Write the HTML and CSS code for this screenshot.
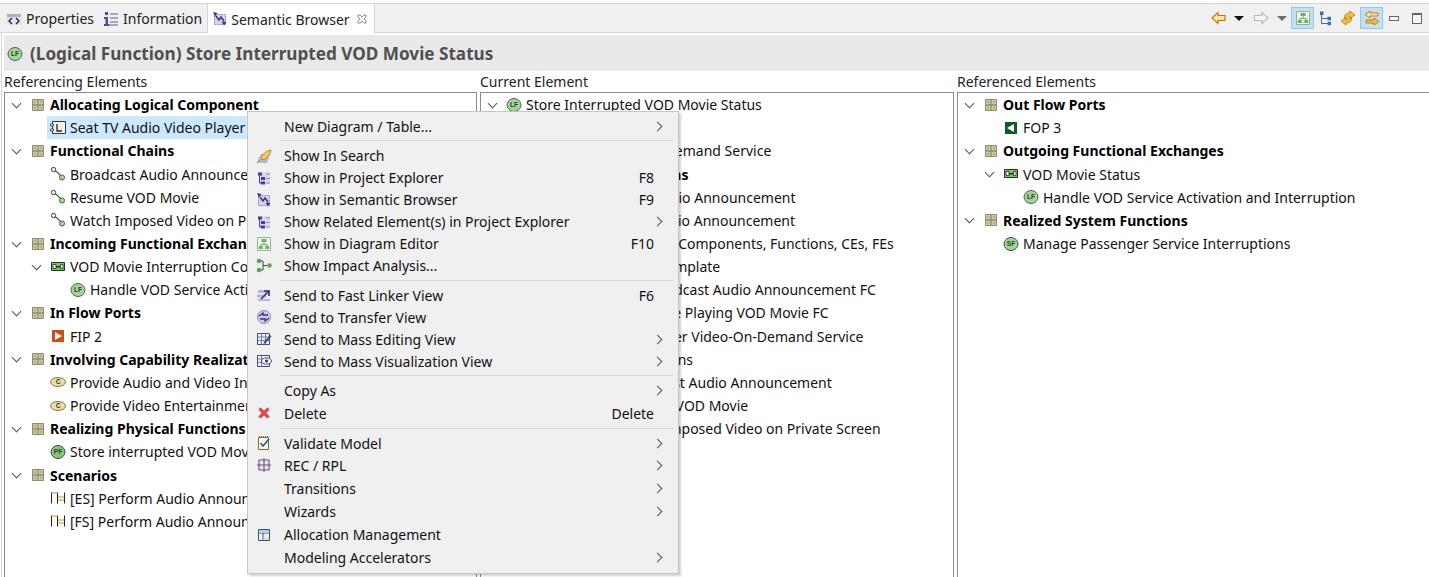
FILE: index.html
```html
<!DOCTYPE html>
<html lang="en">
<head>
    <meta charset="UTF-8">
    <meta name="viewport" content="width=device-width, initial-scale=1.0">
    <title>Semantic Browser</title>
    <link rel="stylesheet" href="styles.css">
</head>
<body>

<svg class="defs" width="0" height="0">
    <symbol id="i-cat" viewBox="0 0 16 16">
        <path d="M2.5 2.5h11v11h-11z" fill="#d9d7bb" stroke="#8f8c6c"/>
        <path d="M8 2v12M2 8h12" stroke="#8f8c6c" stroke-width="1.4"/>
        <path d="M3.5 3.5h3v3h-3zM9.5 3.5h3v3h-3zM3.5 9.5h3v3h-3zM9.5 9.5h3v3h-3z" fill="#b5b291"/>
    </symbol>
    <symbol id="i-lf" viewBox="0 0 16 16">
        <ellipse cx="8" cy="8" rx="7" ry="6.5" fill="#a6d397" stroke="#4a6b4a"/>
        <text x="8" y="10.4" text-anchor="middle" class="ico-text">LF</text>
    </symbol>
    <symbol id="i-pf" viewBox="0 0 16 16">
        <ellipse cx="8" cy="8" rx="7" ry="6.5" fill="#8fc084" stroke="#33503a"/>
        <text x="8" y="10.4" text-anchor="middle" class="ico-text">PF</text>
    </symbol>
    <symbol id="i-sf" viewBox="0 0 16 16">
        <ellipse cx="8" cy="8" rx="7" ry="6.5" fill="#a6d397" stroke="#33503a"/>
        <text x="8" y="10.4" text-anchor="middle" class="ico-text">SF</text>
    </symbol>
    <symbol id="i-comp" viewBox="0 0 16 16">
        <path d="M2.5 1.5h13v12h-13z" fill="#f3f3ee" stroke="#333"/>
        <path d="M.5 4h3v2h-3zM.5 9h3v2h-3z" fill="#fff" stroke="#333" stroke-width=".8"/>
        <path d="M7 4v7h5" fill="none" stroke="#222" stroke-width="1.3"/>
    </symbol>
    <symbol id="i-chain" viewBox="0 0 16 16">
        <path d="M4 4l3 2 3 3 2 2" fill="none" stroke="#555" stroke-width="1.2"/>
        <circle cx="3.5" cy="3.5" r="2.2" fill="#e5f0e0" stroke="#444"/>
        <circle cx="12" cy="11.5" r="2.6" fill="#a6d397" stroke="#4a6b4a"/>
    </symbol>
    <symbol id="i-fx" viewBox="0 0 16 16">
        <path d="M1.5 3.5h13v8h-13z" fill="#7fc06f" stroke="#1f3a1f"/>
        <path d="M3 5.500h3v4H3zM10.500 5.500h2.500v4h-2.500z" fill="#eef7e8" stroke="#1f3a1f" stroke-width=".8"/>
        <path d="M6 7h4.500v1.500H6z" fill="#1f3a1f"/>
    </symbol>
    <symbol id="i-fip" viewBox="0 0 16 16">
        <path d="M2 2h12v12H2z" fill="#cd4d12"/>
        <path d="M5 4l7 4-7 4z" fill="#fff"/>
    </symbol>
    <symbol id="i-fop" viewBox="0 0 16 16">
        <path d="M2 2h12v12H2z" fill="#0f5a2b"/>
        <path d="M11 4L4 8l7 4z" fill="#fff"/>
    </symbol>
    <symbol id="i-cap" viewBox="0 0 16 16">
        <ellipse cx="8" cy="8" rx="7.5" ry="4.5" fill="#f0dc9c" stroke="#84775a"/>
        <text x="8" y="10.4" text-anchor="middle" class="ico-text">C</text>
    </symbol>
    <symbol id="i-scn" viewBox="0 0 16 16">
        <path d="M1.500 2.500v11M7.500 2.500v11M14.500 2.500v11" fill="none" stroke="#222"/>
        <path d="M1.500 3h6M8 7h6M8 10h6" stroke="#c49a2b" stroke-width="1.200"/>
    </symbol>
    <symbol id="i-back" viewBox="0 0 16 16">
        <path d="M2 8l6-5.500v3h7v5H8v3z" fill="#fde6a6" stroke="#b9760f" stroke-width="1.1"/>
    </symbol>
    <symbol id="i-fwd" viewBox="0 0 16 16">
        <path d="M15 8L9 2.500v3H1.500v5H9v3z" fill="#f6f6f6" stroke="#b9b9b9" stroke-width="1.1"/>
    </symbol>
    <symbol id="i-diag" viewBox="0 0 16 16">
        <path d="M1.500 1.500h13v13h-13z" fill="#eef5ea" stroke="#8cbb8a"/>
        <path d="M5.500 3h5v3h-5zM2.800 10h4v3h-4zM9.200 10h4v3h-4z" fill="#74ab70"/>
        <path d="M8 6v2.500M4.800 10V8.500h6.400V10" fill="none" stroke="#74ab70"/>
    </symbol>
    <symbol id="i-tree" viewBox="0 0 16 16">
        <path d="M2.500 4v9.500H9M2.500 8.500H9" fill="none" stroke="#3c6fb0"/>
        <path d="M1 1.500h3.500v3.500H1zM8.500 6.800h3.500v3.400H8.500zM8.500 11.800h3.500v3.400H8.500z" fill="#3c6fb0"/>
    </symbol>
    <symbol id="i-sync" viewBox="0 0 16 16">
        <path d="M4.500 8.500C4 5 6.500 2.500 10 3V1l5 4-5 3.500V6C8.500 5.800 7.200 6.800 7 8.500z" fill="#f5c242" stroke="#b9760f" stroke-width=".8"/>
        <path d="M11.500 8C12 11 9.500 13.500 6 13v2l-5-4 5-3.500V10c1.500.2 2.800-.7 3-2z" fill="#f5c242" stroke="#b9760f" stroke-width=".8"/>
    </symbol>
    <symbol id="i-link" viewBox="0 0 16 16">
        <path d="M1 4.500L6 1v2h8v3H6v2z" fill="#fbe29a" stroke="#b9760f" stroke-width=".9"/>
        <path d="M15 11.500L10 8v2H2v3h8v2z" fill="#f5c242" stroke="#b9760f" stroke-width=".9"/>
    </symbol>
    <symbol id="i-rocket" viewBox="0 0 16 16">
        <path d="M1 14l4-8h9l-3 9H3z" fill="#b6b8d6"/>
        <path d="M5 11c1-5 5-8 10-9-1 5-4 9-9 10z" fill="#f5c95a" stroke="#b9801a" stroke-width=".9"/>
        <path d="M1 15l3-3" stroke="#b9801a"/>
    </symbol>
    <symbol id="i-explorer" viewBox="0 0 16 16">
        <path d="M3 2h11v12H3z" fill="#dcd9ee"/>
        <path d="M2 2.500h4v3H2zM5 7h4v3H5zM5 11.500h4v3H5z" fill="#4b3d8f"/>
        <path d="M3.500 5v8H5" fill="none" stroke="#4b3d8f"/>
        <path d="M10 4h4M10 8.500h4M10 13h4" stroke="#8f89bd"/>
    </symbol>
    <symbol id="i-semantic" viewBox="0 0 16 16">
        <path d="M2.500 3.500h11v10h-11z" fill="#d5d2ea" stroke="#8f89bd" stroke-dasharray="2 1"/>
        <path d="M1 1l4.500 1L3 5.500z" fill="#3e3284"/>
        <path d="M4 5l3 4 2-3 3 4" fill="none" stroke="#3e3284" stroke-width="1.500"/>
        <path d="M9.500 10.500l5 .5-2.500 3.500z" fill="#3e3284"/>
    </symbol>
    <symbol id="i-impact" viewBox="0 0 16 16">
        <circle cx="3" cy="3" r="2.300" fill="#5ba35b"/>
        <circle cx="3" cy="12" r="2.300" fill="#5ba35b"/>
        <circle cx="13.500" cy="7.500" r="2.300" fill="#5ba35b"/>
        <path d="M5 3h2v9H5M7 7.500h4" fill="none" stroke="#444"/>
    </symbol>
    <symbol id="i-linker" viewBox="0 0 16 16">
        <path d="M2 3h12v3H2zM1 7.500h9v3H1zM2 12h12v2H2z" fill="#b9b5d8"/>
        <path d="M5 12l7-7M8 4h5v5" fill="none" stroke="#3e3284" stroke-width="1.700"/>
    </symbol>
    <symbol id="i-transfer" viewBox="0 0 16 16">
        <circle cx="8" cy="8" r="6.500" fill="#cfcce6" stroke="#8f89bd"/>
        <path d="M3 7l4-3v2h5M13 9l-4 3v-2H4" fill="none" stroke="#3e3284" stroke-width="1.300"/>
    </symbol>
    <symbol id="i-massedit" viewBox="0 0 16 16">
        <path d="M1.500 2.500h12v11h-12z" fill="#eef0f6" stroke="#35507d"/>
        <path d="M1.500 6h12M1.500 9.500h12M5.500 2.500v11M9.500 2.500v11" stroke="#6d80a3"/>
        <path d="M8 11l6-7 1.500 1.200-6 7-2 .5z" fill="#4b3d8f"/>
    </symbol>
    <symbol id="i-massvis" viewBox="0 0 16 16">
        <path d="M1.500 2.500h12v11h-12z" fill="#eef0f6" stroke="#35507d"/>
        <path d="M1.500 6h5M1.500 9.500h5M5.500 2.500v11" stroke="#6d80a3"/>
        <ellipse cx="10.500" cy="8" rx="5" ry="3.200" fill="#fff" stroke="#4b3d8f"/>
        <circle cx="10.500" cy="8" r="1.700" fill="#4b3d8f"/>
    </symbol>
    <symbol id="i-delete" viewBox="0 0 16 16">
        <path d="M3 4.500l1.500-1.500L8 6.300 11.500 3 13 4.500 9.700 8l3.300 3.500-1.500 1.500L8 9.700 4.500 13 3 11.500 6.300 8z" fill="#e8474f" stroke="#d4343c"/>
    </symbol>
    <symbol id="i-validate" viewBox="0 0 16 16">
        <path d="M2.500 2.500h10v12h-10z" fill="#fbf8e8" stroke="#7a6a3c"/>
        <path d="M3 1.500h9" stroke="#7a6a3c" stroke-dasharray="1 1"/>
        <path d="M4.500 8l2.500 3 6-7" fill="none" stroke="#2c5aa8" stroke-width="1.700"/>
    </symbol>
    <symbol id="i-rec" viewBox="0 0 16 16">
        <path d="M3 3h10v10H3zM8 1v14M1 8h14" fill="#ece8ee" stroke="#6c5079" stroke-width="1.100"/>
    </symbol>
    <symbol id="i-alloc" viewBox="0 0 16 16">
        <path d="M2.500 2.500h11v11h-11z" fill="#eef2f6" stroke="#35507d"/>
        <path d="M2.500 6h11M7 6v7.500" stroke="#35507d"/>
        <path d="M3 3h10v3H3z" fill="#b9cfe4"/>
        <path d="M7.500 10h5.500v3H7.500z" fill="#f0e0ad"/>
    </symbol>
</svg>

<div class="page">
    <div class="tabbar">
        <div class="tab">
            <svg class="ico" viewBox="0 0 16 16">
                <path d="M1 3h14v3H1z" fill="#aab0c8"/>
                <path d="M1 6h14v8H1z" fill="#dfe1ec"/>
                <path d="M6 7l-3 3 3 3M10 7l3 3-3 3" fill="none" stroke="#222" stroke-width="1.300"/>
            </svg>
            Properties
        </div>
        <div class="tab">
            <svg class="ico" viewBox="0 0 16 16">
                <path d="M7 2h8v2H7zM7 6h8v2H7zM7 10h8v2H7zM7 13h8v2H7z" fill="#a9a5cf"/>
                <path d="M2 1h3v3H2zM1 6h4v7h1.500v2H1v-2h1.500V8H1z" fill="#54489a"/>
            </svg>
            Information
        </div>
        <div class="tab tab-active">
            <svg class="ico"><use href="#i-semantic"/></svg>
            Semantic Browser
            <svg class="tab-close" viewBox="0 0 10 10">
                <path d="M1 1h2l2 2 2-2h2v2L7 5l2 2v2H7L5 7 3 9H1V7l2-2-2-2z" fill="none" stroke="#8d8d8d"/>
            </svg>
        </div>
        <div class="toolbar">
            <svg class="tool"><use href="#i-back"/></svg>
            <span class="drop"></span>
            <svg class="tool tool-fwd"><use href="#i-fwd"/></svg>
            <span class="drop drop-off"></span>
            <span class="toggle"><svg class="tool"><use href="#i-diag"/></svg></span>
            <svg class="tool tool-tree"><use href="#i-tree"/></svg>
            <svg class="tool tool-sync"><use href="#i-sync"/></svg>
            <span class="toggle toggle-link"><svg class="tool"><use href="#i-link"/></svg></span>
            <span class="win-min"></span>
            <span class="win-max"></span>
        </div>
    </div>

    <div class="view">
        <div class="view-title">
            <svg class="ico"><use href="#i-lf"/></svg>
            (Logical Function) Store Interrupted VOD Movie Status
        </div>

        <div class="columns">
            <div class="column">
                <div class="col-label">Referencing Elements</div>
                <div class="tree">
                    <div class="row"><span class="twisty"></span><svg class="ico"><use href="#i-cat"/></svg><b>Allocating Logical Component</b></div>
                    <div class="row d1"><span class="selected"><svg class="ico"><use href="#i-comp"/></svg>Seat TV Audio Video Player</span></div>
                    <div class="row"><span class="twisty"></span><svg class="ico"><use href="#i-cat"/></svg><b>Functional Chains</b></div>
                    <div class="row d1"><svg class="ico"><use href="#i-chain"/></svg>Broadcast Audio Announcement</div>
                    <div class="row d1"><svg class="ico"><use href="#i-chain"/></svg>Resume VOD Movie</div>
                    <div class="row d1"><svg class="ico"><use href="#i-chain"/></svg>Watch Imposed Video on Private Screen</div>
                    <div class="row"><span class="twisty"></span><svg class="ico"><use href="#i-cat"/></svg><b>Incoming Functional Exchanges</b></div>
                    <div class="row open"><span class="twisty"></span><svg class="ico"><use href="#i-fx"/></svg>VOD Movie Interruption Command</div>
                    <div class="row d2"><svg class="ico"><use href="#i-lf"/></svg>Handle VOD Service Activation and Interruption</div>
                    <div class="row"><span class="twisty"></span><svg class="ico"><use href="#i-cat"/></svg><b>In Flow Ports</b></div>
                    <div class="row d1"><svg class="ico"><use href="#i-fip"/></svg>FIP 2</div>
                    <div class="row"><span class="twisty"></span><svg class="ico"><use href="#i-cat"/></svg><b>Involving Capability Realizations</b></div>
                    <div class="row d1"><svg class="ico"><use href="#i-cap"/></svg>Provide Audio and Video Information</div>
                    <div class="row d1"><svg class="ico"><use href="#i-cap"/></svg>Provide Video Entertainment Services</div>
                    <div class="row"><span class="twisty"></span><svg class="ico"><use href="#i-cat"/></svg><b>Realizing Physical Functions</b></div>
                    <div class="row d1"><svg class="ico"><use href="#i-pf"/></svg>Store interrupted VOD Movie Status</div>
                    <div class="row"><span class="twisty"></span><svg class="ico"><use href="#i-cat"/></svg><b>Scenarios</b></div>
                    <div class="row d1"><svg class="ico"><use href="#i-scn"/></svg>[ES] Perform Audio Announcement</div>
                    <div class="row d1"><svg class="ico"><use href="#i-scn"/></svg>[FS] Perform Audio Announcement</div>
                </div>
            </div>

            <div class="column">
                <div class="col-label">Current Element</div>
                <div class="tree">
                    <div class="row"><span class="twisty"></span><svg class="ico"><use href="#i-lf"/></svg>Store Interrupted VOD Movie Status</div>
                    <div class="row d1"><svg class="ico"><use href="#i-cat"/></svg><b>Capabilities</b></div>
                    <div class="row d1"><svg class="ico"><use href="#i-cap"/></svg>Provide Video-On-Demand Service</div>
                    <div class="row d1"><svg class="ico"><use href="#i-cat"/></svg><b>Allocating Functions</b></div>
                    <div class="row d2"><svg class="ico"><use href="#i-scn"/></svg>[ES] Perform Audio Announcement</div>
                    <div class="row d2"><svg class="ico"><use href="#i-scn"/></svg>[FS] Perform Audio Announcement</div>
                    <div class="row d2"><svg class="ico"><use href="#i-scn"/></svg>Allocate Physical Components, Functions, CEs, FEs</div>
                    <div class="row d1"><svg class="ico"><use href="#i-scn"/></svg>Functional Chain Template</div>
                    <div class="row d1"><svg class="ico"><use href="#i-chain"/></svg>Start and Stop Broadcast Audio Announcement FC</div>
                    <div class="row d2"><svg class="ico"><use href="#i-chain"/></svg>Stop and Resume Playing VOD Movie FC</div>
                    <div class="row d2"><svg class="ico"><use href="#i-cap"/></svg>Provide Passenger Video-On-Demand Service</div>
                    <div class="row d1"><svg class="ico"><use href="#i-cat"/></svg>Capability Realizations</div>
                    <div class="row d2"><svg class="ico"><use href="#i-cap"/></svg>Provide Broadcast Audio Announcement</div>
                    <div class="row d2"><svg class="ico"><use href="#i-cap"/></svg>Provide Resume VOD Movie</div>
                    <div class="row d2"><svg class="ico"><use href="#i-cap"/></svg>Provide Watch Imposed Video on Private Screen</div>
                </div>
            </div>

            <div class="column">
                <div class="col-label">Referenced Elements</div>
                <div class="tree tree-last">
                    <div class="row"><span class="twisty"></span><svg class="ico"><use href="#i-cat"/></svg><b>Out Flow Ports</b></div>
                    <div class="row d1"><svg class="ico"><use href="#i-fop"/></svg>FOP 3</div>
                    <div class="row"><span class="twisty"></span><svg class="ico"><use href="#i-cat"/></svg><b>Outgoing Functional Exchanges</b></div>
                    <div class="row open"><span class="twisty"></span><svg class="ico"><use href="#i-fx"/></svg>VOD Movie Status</div>
                    <div class="row d2"><svg class="ico"><use href="#i-lf"/></svg>Handle VOD Service Activation and Interruption</div>
                    <div class="row"><span class="twisty"></span><svg class="ico"><use href="#i-cat"/></svg><b>Realized System Functions</b></div>
                    <div class="row d1"><svg class="ico"><use href="#i-sf"/></svg>Manage Passenger Service Interruptions</div>
                </div>
            </div>
        </div>
    </div>

    <div class="menu">
        <div class="item"><span class="item-ico"></span><span class="item-text">New Diagram / Table...</span><span class="arrow"></span></div>
        <div class="sep"></div>
        <div class="item"><span class="item-ico"><svg class="ico"><use href="#i-rocket"/></svg></span><span class="item-text">Show In Search</span></div>
        <div class="item"><span class="item-ico"><svg class="ico"><use href="#i-explorer"/></svg></span><span class="item-text">Show in Project Explorer</span><span class="key">F8</span></div>
        <div class="item"><span class="item-ico"><svg class="ico"><use href="#i-semantic"/></svg></span><span class="item-text">Show in Semantic Browser</span><span class="key">F9</span></div>
        <div class="item"><span class="item-ico"><svg class="ico"><use href="#i-explorer"/></svg></span><span class="item-text">Show Related Element(s) in Project Explorer</span><span class="arrow"></span></div>
        <div class="item"><span class="item-ico"><svg class="ico"><use href="#i-diag"/></svg></span><span class="item-text">Show in Diagram Editor</span><span class="key">F10</span></div>
        <div class="item"><span class="item-ico"><svg class="ico"><use href="#i-impact"/></svg></span><span class="item-text">Show Impact Analysis...</span></div>
        <div class="sep"></div>
        <div class="item"><span class="item-ico"><svg class="ico"><use href="#i-linker"/></svg></span><span class="item-text">Send to Fast Linker View</span><span class="key">F6</span></div>
        <div class="item"><span class="item-ico"><svg class="ico"><use href="#i-transfer"/></svg></span><span class="item-text">Send to Transfer View</span></div>
        <div class="item"><span class="item-ico"><svg class="ico"><use href="#i-massedit"/></svg></span><span class="item-text">Send to Mass Editing View</span><span class="arrow"></span></div>
        <div class="item"><span class="item-ico"><svg class="ico"><use href="#i-massvis"/></svg></span><span class="item-text">Send to Mass Visualization View</span><span class="arrow"></span></div>
        <div class="sep sep-tight"></div>
        <div class="item tall"><span class="item-ico"></span><span class="item-text">Copy As</span><span class="arrow"></span></div>
        <div class="item tall"><span class="item-ico"><svg class="ico"><use href="#i-delete"/></svg></span><span class="item-text">Delete</span><span class="key">Delete</span></div>
        <div class="sep"></div>
        <div class="item"><span class="item-ico"><svg class="ico"><use href="#i-validate"/></svg></span><span class="item-text">Validate Model</span><span class="arrow"></span></div>
        <div class="item"><span class="item-ico"><svg class="ico"><use href="#i-rec"/></svg></span><span class="item-text">REC / RPL</span><span class="arrow"></span></div>
        <div class="item taller"><span class="item-ico"></span><span class="item-text">Transitions</span><span class="arrow"></span></div>
        <div class="item tall"><span class="item-ico"></span><span class="item-text">Wizards</span><span class="arrow"></span></div>
        <div class="item tall"><span class="item-ico"><svg class="ico"><use href="#i-alloc"/></svg></span><span class="item-text">Allocation Management</span></div>
        <div class="item tall"><span class="item-ico"></span><span class="item-text">Modeling Accelerators</span><span class="arrow"></span></div>
    </div>
</div>

</body>
</html>
```

FILE: styles.css
```css
* {
    box-sizing: border-box;
}

html, body {
    margin: 0;
    height: 100%;
    overflow: hidden;
}

body {
    font-family: "Noto Sans", "Open Sans", sans-serif;
    font-size: 14px;
    color: #111;
    background: #fff;
}

.defs {
    display: block;
    height: 0;
}

.ico {
    width: 16px;
    height: 16px;
    flex: none;
}

.ico-text {
    font-family: "Liberation Sans", sans-serif;
    font-size: 6.5px;
    font-weight: 700;
    fill: #27402a;
}

.page {
    position: relative;
    height: 577px;
    padding-top: 3px;
    display: flex;
    flex-direction: column;
    overflow: hidden;
}

/* tabs */
.tabbar {
    height: 30px;
    flex: none;
    display: flex;
    align-items: stretch;
    padding-left: 3px;
    background: #f0f0f0;
    border-top: 1px solid #d6d6d6;
    border-bottom: 1px solid #d6d6d6;
}

.tab {
    display: flex;
    align-items: center;
    gap: 4px;
    padding: 1px 4px 0 3px;
    color: #222;
}

.tab + .tab {
    margin-left: 2px;
}

.tab + .tab-active {
    width: 168px;
    margin-left: 1px;
    margin-bottom: -1px;
    padding-left: 4px;
    gap: 3px;
    background: #fff;
    border-left: 1px solid #d6d6d6;
    border-right: 1px solid #d6d6d6;
}

.tab-close {
    width: 10px;
    height: 10px;
    margin-left: 4px;
}

.toolbar {
    margin-left: auto;
    display: flex;
    align-items: center;
    padding-right: 7px;
}

.tool {
    width: 16px;
    height: 16px;
    flex: none;
}

.tool-fwd {
    margin-left: 9px;
}

.tool-tree {
    margin-left: 5px;
}

.tool-sync {
    margin-left: 5px;
}

.drop {
    width: 0;
    height: 0;
    margin-left: 8px;
    border-left: 5px solid transparent;
    border-right: 5px solid transparent;
    border-top: 5px solid #111;
}

.drop-off {
    border-top-color: #6e6e6e;
}

.toggle {
    width: 23px;
    height: 22px;
    margin-left: 4px;
    display: flex;
    align-items: center;
    justify-content: center;
    background: #c5def3;
    border: 1px solid #90c8f6;
}

.toggle-link {
    margin-left: 4px;
}

.win-min {
    width: 10px;
    height: 5px;
    margin-left: 6px;
    border: 1px solid #666;
    background: #f8f8f8;
}

.win-max {
    width: 10px;
    height: 11px;
    margin-left: 13px;
    border: 1px solid #666;
    border-top-width: 2px;
    background: #f8f8f8;
}

/* view */
.view {
    flex: 1;
    min-height: 0;
    margin-left: 1px;
    padding: 2px 0 0 2px;
    border-left: 1px solid #d6d6d6;
    display: flex;
    flex-direction: column;
}

.view-title {
    height: 36px;
    flex: none;
    display: flex;
    align-items: center;
    gap: 7px;
    padding: 1px 0 0 3px;
    background: #e9e9e9;
    color: #505050;
    font-size: 17.15px;
    font-weight: 700;
}

.columns {
    flex: 1;
    min-height: 0;
    display: grid;
    grid-template-columns: 473px 474px 1fr;
    gap: 3px;
}

.column {
    min-width: 0;
    min-height: 0;
    display: flex;
    flex-direction: column;
}

.col-label {
    height: 21px;
    flex: none;
    line-height: 22px;
    color: #222;
}

.tree {
    flex: 1;
    min-height: 0;
    overflow: hidden;
    border: 1px solid #8c8c8c;
    border-bottom: none;
}

.tree-last {
    border-right: none;
}

.row {
    height: 23.17px;
    display: flex;
    align-items: center;
    padding-left: 3px;
    white-space: nowrap;
}

.row b {
    color: #000;
}

.row > .ico {
    margin-right: 4px;
}

.row.d1 {
    padding-left: 45px;
}

.row.d2 {
    padding-left: 65px;
}

.row.open {
    padding-left: 23px;
}

.twisty {
    width: 16px;
    height: 16px;
    margin-right: 6px;
    flex: none;
}

.twisty::before {
    content: "";
    display: block;
    width: 6px;
    height: 6px;
    margin: 3px 0 0 5px;
    border-right: 1.500px solid #555;
    border-bottom: 1.500px solid #555;
    transform: rotate(45deg);
}

.selected {
    height: 23px;
    flex: 1;
    display: flex;
    align-items: center;
    gap: 4px;
    margin-left: -3px;
    padding-left: 3px;
    background: #cce8ff;
}

/* context menu */
.menu {
    position: absolute;
    left: 247px;
    top: 111px;
    width: 432px;
    height: 463px;
    padding: 3px 3px 0 2px;
    background: #f0f0f0;
    border: 1px solid #c6c6c6;
    box-shadow: 2px 2px 2px rgba(0, 0, 0, .18);
    color: #111;
}

.item {
    height: 22px;
    display: flex;
    align-items: center;
}

.item.tall {
    height: 23px;
}

.item.taller {
    height: 24px;
}

.item-ico {
    width: 34px;
    flex: none;
    display: flex;
    align-items: center;
    padding-left: 6px;
}

.item-text {
    flex: 1;
    white-space: nowrap;
}

.key {
    flex: 0 0 60px;
    margin-right: 21px;
    text-align: right;
}

.arrow {
    width: 7px;
    height: 7px;
    margin-right: 14px;
    border-top: 1px solid #555;
    border-right: 1px solid #555;
    transform: rotate(45deg);
}

.sep {
    height: 1px;
    margin: 3px 2px 3.500px 30px;
    background: #d4d4d4;
}

.sep-tight {
    margin-bottom: 2.500px;
}
```
